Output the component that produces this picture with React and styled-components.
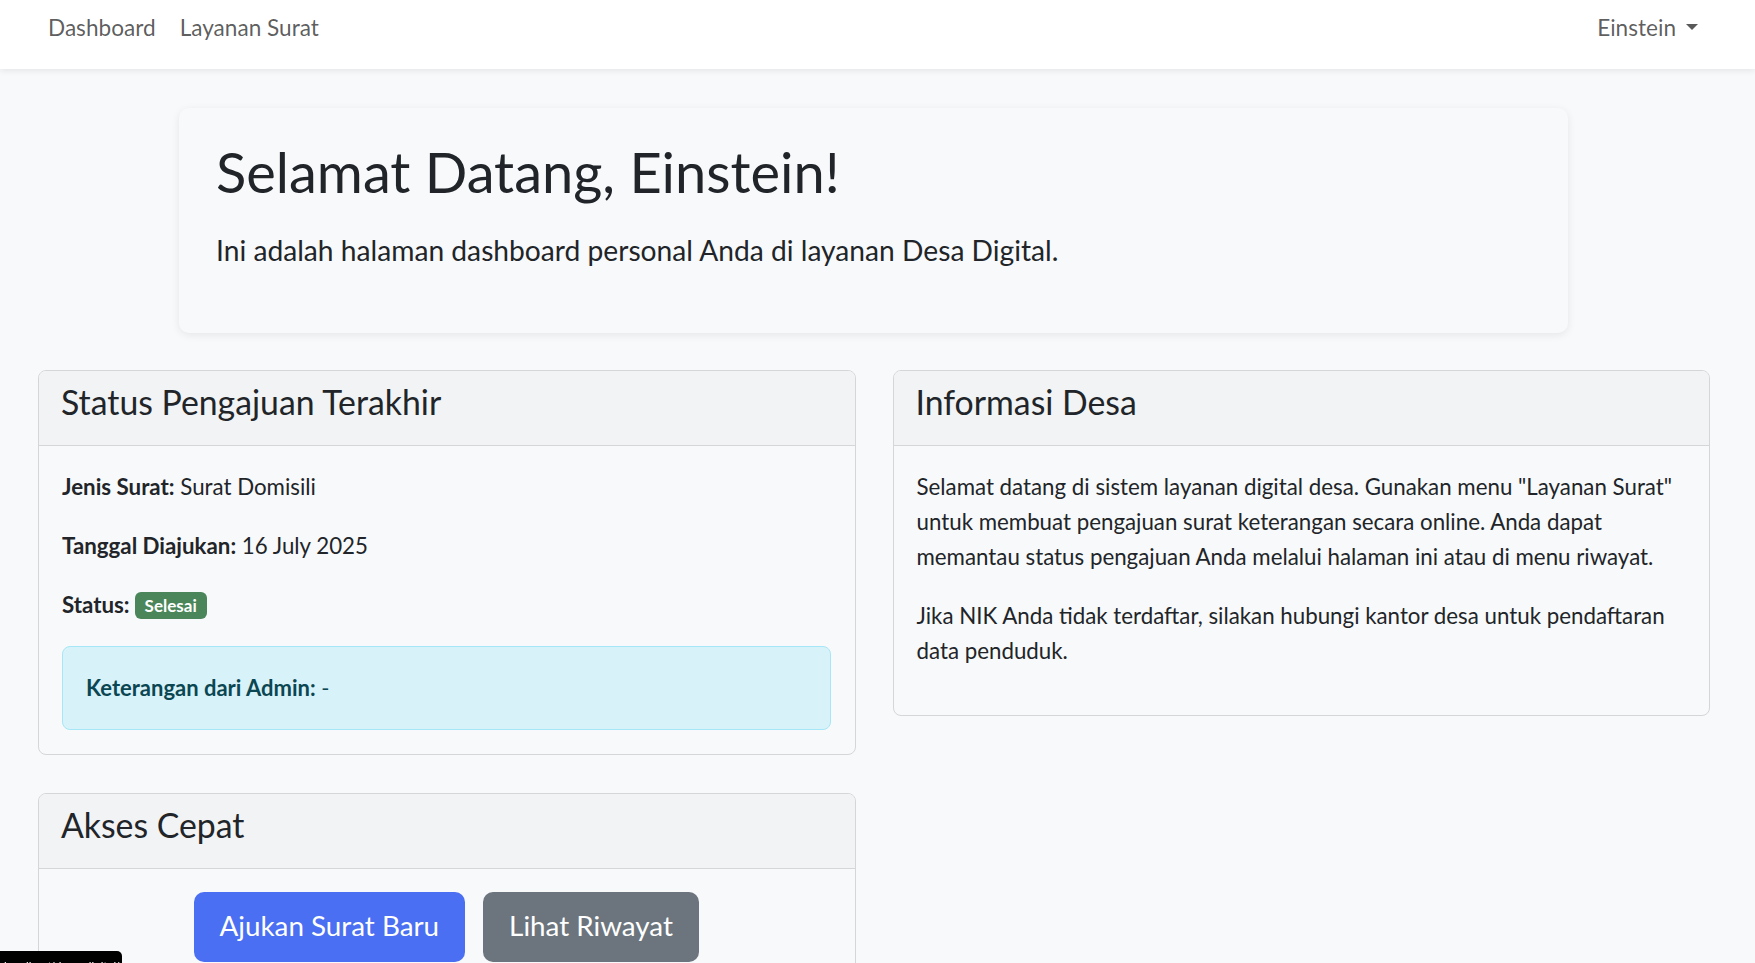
import React from "react";
import styled, { createGlobalStyle } from "styled-components";

const GlobalStyle = createGlobalStyle`
  html, body { margin: 0; padding: 0; }
  body {
    background: #f8f9fa;
    font-family: "Lato", "Noto Sans", sans-serif;
    color: #212529;
    -webkit-font-smoothing: antialiased;
  }
  * { box-sizing: border-box; }
`;

const Navbar = styled.nav`
  height: 69px;
  background: #ffffff;
  box-shadow: 0 2px 6px rgba(0, 0, 0, 0.08);
  display: flex;
  justify-content: space-between;
  align-items: flex-start;
  padding: 12px 57px 0 48px;
  position: relative;
  z-index: 1;
`;

const NavGroup = styled.div`
  display: flex;
  gap: 24px;
`;

const NavLink = styled.a`
  font-size: 22.6px;
  line-height: 32px;
  color: rgba(0, 0, 0, 0.65);
  text-decoration: none;
  cursor: pointer;
`;

const UserToggle = styled(NavLink)`
  display: flex;
  align-items: center;
  gap: 10px;
  &::after {
    content: "";
    display: block;
    width: 0;
    height: 0;
    border-top: 6px solid rgba(0, 0, 0, 0.65);
    border-left: 6px solid transparent;
    border-right: 6px solid transparent;
    margin-top: -2px;
  }
`;

const Main = styled.main`
  padding: 39px 45px 40px 38px;
`;

const Jumbotron = styled.section`
  margin: 0 142px 0 141px;
  height: 225px;
  background: #f8f9fa;
  border-radius: 10px;
  box-shadow: 0 2px 8px rgba(0, 0, 0, 0.08);
  padding: 22px 37px;
`;

const Title = styled.h1`
  margin: 0;
  font-size: 56px;
  font-weight: 400;
  line-height: 84px;
  color: #212529;
`;

const Lead = styled.p`
  margin: 18px 0 0;
  font-size: 28.2px;
  font-weight: 400;
  line-height: 36px;
  color: #212529;
`;

const Row = styled.div`
  margin-top: 37px;
  display: grid;
  grid-template-columns: 1fr 1fr;
  gap: 37px;
  align-items: start;
`;

const Column = styled.div`
  display: flex;
  flex-direction: column;
  gap: 38px;
`;

const Card = styled.div`
  border: 1px solid #d5d6d7;
  border-radius: 8px;
  background: #f8f9fa;
  overflow: hidden;
`;

const CardHeader = styled.div`
  height: 75px;
  background: #f2f3f4;
  border-bottom: 1px solid #d5d6d7;
  padding: 0 22px;
  display: flex;
  align-items: center;
`;

const CardTitle = styled.h3`
  margin: 0 0 13px;
  font-size: 33.8px;
  font-weight: 400;
  line-height: 40px;
  color: #212529;
`;

const CardBody = styled.div`
  padding: 23px 24px ${(p) => (p.$trail ? "47px" : "24px")} 23px;
  display: flex;
  flex-direction: column;
  gap: 24px;
  align-items: ${(p) => (p.$center ? "center" : "stretch")};
`;

const Text = styled.p`
  margin: 0;
  font-size: 22.3px;
  line-height: 35px;
  color: #212529;
`;

const Label = styled.strong`
  font-weight: 700;
`;

const Badge = styled.span`
  display: inline-block;
  margin-left: 5px;
  padding: 0 10px;
  height: 27px;
  line-height: 27px;
  border-radius: 6px;
  background: #4a865a;
  color: #ffffff;
  font-size: 17px;
  font-weight: 700;
  vertical-align: 1px;
`;

const Alert = styled.div`
  padding: 24px 23px;
  border: 1px solid #a6e6f6;
  border-radius: 8px;
  background: #d8f2f9;
  color: #0b4753;
  font-size: 22px;
  line-height: 34px;
`;

const ButtonRow = styled.div`
  display: flex;
  gap: 18px;
  justify-content: center;
`;

const Button = styled.button`
  height: 70px;
  padding: 0 26px 3px;
  border: none;
  border-radius: 10px;
  background: ${(p) => (p.$variant === "secondary" ? "#6c757d" : "#4a6ff2")};
  color: #ffffff;
  font-family: inherit;
  font-size: 27.8px;
  cursor: pointer;
`;

const StatusBar = styled.div`
  position: fixed;
  left: 0;
  top: 951px;
  width: 122px;
  height: 30px;
  background: #000000;
  border-top-right-radius: 5px;
  color: #ffffff;
  font-family: "Liberation Sans", sans-serif;
  font-size: 12px;
  padding: 9px 4px;
  white-space: nowrap;
  overflow: hidden;
`;

export default function App() {
  return (
    <>
      <GlobalStyle />
      <Navbar>
        <NavGroup>
          <NavLink>Dashboard</NavLink>
          <NavLink>Layanan Surat</NavLink>
        </NavGroup>
        <UserToggle>Einstein</UserToggle>
      </Navbar>
      <Main>
        <Jumbotron>
          <Title>Selamat Datang, Einstein!</Title>
          <Lead>Ini adalah halaman dashboard personal Anda di layanan Desa Digital.</Lead>
        </Jumbotron>
        <Row>
          <Column>
            <Card>
              <CardHeader>
                <CardTitle>Status Pengajuan Terakhir</CardTitle>
              </CardHeader>
              <CardBody>
                <Text>
                  <Label>Jenis Surat:</Label> Surat Domisili
                </Text>
                <Text>
                  <Label>Tanggal Diajukan:</Label> 16 July 2025
                </Text>
                <Text>
                  <Label>Status:</Label>
                  <Badge>Selesai</Badge>
                </Text>
                <Alert>
                  <Label>Keterangan dari Admin:</Label> -
                </Alert>
              </CardBody>
            </Card>
            <Card>
              <CardHeader>
                <CardTitle>Akses Cepat</CardTitle>
              </CardHeader>
              <CardBody $center>
                <ButtonRow>
                  <Button>Ajukan Surat Baru</Button>
                  <Button $variant="secondary">Lihat Riwayat</Button>
                </ButtonRow>
              </CardBody>
            </Card>
          </Column>
          <Card>
            <CardHeader>
              <CardTitle>Informasi Desa</CardTitle>
            </CardHeader>
            <CardBody $trail>
              <Text>
                Selamat datang di sistem layanan digital desa. Gunakan menu "Layanan Surat" untuk
                membuat pengajuan surat keterangan secara online. Anda dapat memantau status
                pengajuan Anda melalui halaman ini atau di menu riwayat.
              </Text>
              <Text>
                Jika NIK Anda tidak terdaftar, silakan hubungi kantor desa untuk pendaftaran data
                penduduk.
              </Text>
            </CardBody>
          </Card>
        </Row>
      </Main>
      <StatusBar>localhost/desa-digital/riwayat</StatusBar>
    </>
  );
}
